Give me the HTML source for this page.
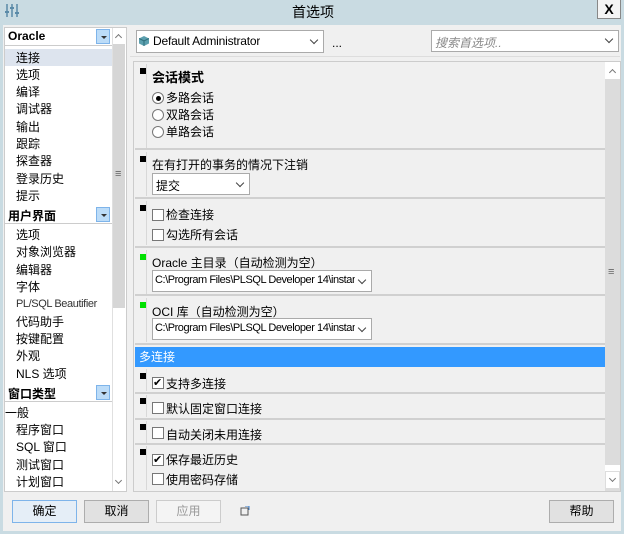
<!DOCTYPE html>
<html><head><meta charset="utf-8">
<style>
*{margin:0;padding:0;box-sizing:border-box}
body{width:624px;height:534px;background:#c9dbe2;font-family:"Liberation Sans","Noto Sans CJK SC",sans-serif;font-size:12px;color:#000;position:relative;overflow:hidden}
.a{position:absolute}
#main{left:3px;top:25px;width:618px;height:506px;background:#f0f0f0}
.t{position:absolute;white-space:nowrap;line-height:16px}
.n{font-size:11px;letter-spacing:-0.2px}
.hdr{position:absolute;left:5px;width:107px;height:18px;background:#fff;border-bottom:1px solid #ccc;font-weight:bold}
.hdr span{position:absolute;left:3px;top:1px}
.dd{position:absolute;right:2px;top:1px;width:14px;height:15px;background:#bcdcf8;border:1px solid #7eb4ea}
.dd:after{content:"";position:absolute;left:4px;top:6px;border:3px solid transparent;border-top:3px solid #333}
.sep{position:absolute;left:135px;width:470px;height:2px;background:#d0d0d0}
.sq{position:absolute;left:140px;width:6px;height:6px;background:#000}
.vl{position:absolute;left:146px;width:1px;background:#d8d8d8}
.cb{position:absolute;width:12px;height:12px;border:1px solid #777;background:#fff}
.rd{position:absolute;width:12px;height:12px;border:1px solid #777;border-radius:50%;background:#fff}
.sel{position:absolute;background:#fff;border:1px solid #aaa;height:22px}
.sel span{position:absolute;left:3px;top:3px;white-space:nowrap;overflow:hidden}
.chev{position:absolute;width:6px;height:6px;border-right:1.3px solid #444;border-bottom:1.3px solid #444;transform:rotate(45deg)}
.btn{position:absolute;top:500px;height:23px;background:#e1e1e1;border:1px solid #adadad;text-align:center;line-height:21px}
</style></head><body>
<svg class="a" style="left:5px;top:3px" width="14" height="15"><g stroke="#5a8aa8" stroke-width="1.5"><line x1="2" y1="1" x2="2" y2="14"/><line x1="7" y1="1" x2="7" y2="14"/><line x1="12" y1="1" x2="12" y2="14"/></g><g fill="#5a8aa8"><rect x="0" y="8" width="4" height="2"/><rect x="5" y="4" width="4" height="2"/><rect x="10" y="9" width="4" height="2"/></g></svg>
<div class="t" style="left:292px;top:4px;font-size:14px">首选项</div>
<div class="a" style="left:597px;top:-1px;width:24px;height:20px;background:#f4f4f4;border:1px solid #888;text-align:center;font-weight:bold;font-size:14px;line-height:18px">X</div>
<div id="main" class="a"></div>

<div class="a" style="left:4px;top:27px;width:123px;height:465px;border:1px solid #ccc;background:#fff"></div>
<div class="a" style="left:5px;top:28px;width:107px;height:463px;background:#fff"></div>
<div class="hdr" style="top:28px"><span>Oracle</span><div class="dd"></div></div>
<div class="a" style="left:5px;top:49px;width:107px;height:17px;background:#dde4ee"></div>
<div class="t" style="left:16px;top:50px">连接</div>
<div class="t" style="left:16px;top:67px">选项</div>
<div class="t" style="left:16px;top:84px">编译</div>
<div class="t" style="left:16px;top:101px">调试器</div>
<div class="t" style="left:16px;top:119px">输出</div>
<div class="t" style="left:16px;top:136px">跟踪</div>
<div class="t" style="left:16px;top:153px">探查器</div>
<div class="t" style="left:16px;top:171px">登录历史</div>
<div class="t" style="left:16px;top:188px">提示</div>
<div class="hdr" style="top:206px"><span>用户界面</span><div class="dd"></div></div>
<div class="t" style="left:16px;top:227px">选项</div>
<div class="t" style="left:16px;top:244px">对象浏览器</div>
<div class="t" style="left:16px;top:262px">编辑器</div>
<div class="t" style="left:16px;top:279px">字体</div>
<div class="t n" style="left:16px;top:296px;color:#333;letter-spacing:-0.4px">PL/SQL Beautifier</div>
<div class="t" style="left:16px;top:314px">代码助手</div>
<div class="t" style="left:16px;top:331px">按键配置</div>
<div class="t" style="left:16px;top:348px">外观</div>
<div class="t" style="left:16px;top:366px">NLS 选项</div>
<div class="hdr" style="top:384px"><span>窗口类型</span><div class="dd"></div></div>
<div class="t" style="left:5px;top:405px">一般</div>
<div class="t" style="left:16px;top:422px">程序窗口</div>
<div class="t" style="left:16px;top:439px">SQL 窗口</div>
<div class="t" style="left:16px;top:457px">测试窗口</div>
<div class="t" style="left:16px;top:474px">计划窗口</div>
<div class="a" style="left:112px;top:28px;width:14px;height:463px;background:#fff;border-left:1px solid #e0e0e0"></div>
<div class="chev" style="left:116px;top:35px;transform:rotate(225deg);width:5px;height:5px;border-color:#777;border-width:1px"></div>
<div class="a" style="left:113px;top:44px;width:12px;height:264px;background:#d6d6d6"></div>
<div class="t" style="left:115px;top:166px;color:#666;font-size:11px">≡</div>
<div class="chev" style="left:116px;top:478px;width:5px;height:5px;border-color:#777;border-width:1px"></div>

<div class="sel" style="left:136px;top:30px;width:188px;height:23px"><span class="n" style="left:16px;font-size:12px;letter-spacing:-0.2px">Default Administrator</span></div>
<svg class="a" style="left:139px;top:36px" width="10" height="10"><path d="M5 0L10 2.5V7.5L5 10L0 7.5V2.5Z" fill="#5b9fae"/><path d="M0 2.5L5 5L10 2.5M5 5V10" stroke="#2e6d7a" fill="none"/></svg>
<div class="chev" style="left:311px;top:37px"></div>
<div class="t" style="left:332px;top:35px">...</div>
<div class="sel" style="left:431px;top:30px;width:188px;height:22px"><span style="color:#888;font-style:italic">搜索首选项..</span></div>
<div class="chev" style="left:606px;top:36px"></div>
<div class="a" style="left:130px;top:56px;width:490px;height:1px;background:#ddd"></div>

<div class="a" style="left:133px;top:61px;width:488px;height:431px;border:1px solid #ccc;background:#f0f0f0"></div>
<div class="a" style="left:605px;top:62px;width:15px;height:429px;background:#dcdcdc"></div>
<div class="a" style="left:605px;top:62px;width:15px;height:17px;background:#fff"></div>
<div class="chev" style="left:610px;top:70px;transform:rotate(225deg);width:5px;height:5px;border-color:#777;border-width:1px"></div>
<div class="a" style="left:605px;top:465px;width:15px;height:6px;background:#fff"></div>
<div class="a" style="left:605px;top:471px;width:15px;height:18px;background:#fff;border:1px solid #ddd"></div>
<div class="chev" style="left:610px;top:476px;width:5px;height:5px;border-color:#777;border-width:1px"></div>
<div class="t" style="left:608px;top:264px;color:#666;font-size:11px">≡</div>

<div class="sq" style="top:68px"></div><div class="vl" style="top:64px;height:84px"></div>
<div class="t" style="left:152px;top:70px;font-weight:bold;font-size:13px">会话模式</div>
<div class="rd" style="left:152px;top:92px"></div><div class="a" style="left:156px;top:96px;width:5px;height:5px;border-radius:50%;background:#000"></div>
<div class="t" style="left:166px;top:90px">多路会话</div>
<div class="rd" style="left:152px;top:109px"></div><div class="t" style="left:166px;top:107px">双路会话</div>
<div class="rd" style="left:152px;top:126px"></div><div class="t" style="left:166px;top:124px">单路会话</div>
<div class="sep" style="top:148px"></div>
<div class="sq" style="top:156px"></div><div class="vl" style="top:152px;height:44px"></div>
<div class="t" style="left:152px;top:157px">在有打开的事务的情况下注销</div>
<div class="sel" style="left:152px;top:173px;width:98px"><span>提交</span></div>
<div class="chev" style="left:237px;top:180px"></div>
<div class="sep" style="top:197px"></div>
<div class="sq" style="top:205px"></div><div class="vl" style="top:201px;height:44px"></div>
<div class="cb" style="left:152px;top:209px"></div><div class="t" style="left:166px;top:207px">检查连接</div>
<div class="cb" style="left:152px;top:229px"></div><div class="t" style="left:166px;top:227px">勾选所有会话</div>
<div class="sep" style="top:246px"></div>
<div class="sq" style="top:254px;background:#00e000"></div><div class="vl" style="top:250px;height:44px"></div>
<div class="t" style="left:152px;top:255px">Oracle 主目录（自动检测为空）</div>
<div class="sel" style="left:152px;top:270px;width:220px"><span class="n" style="width:200px;left:2px;letter-spacing:-0.45px">C:\Program Files\PLSQL Developer 14\instantcl</span></div>
<div class="chev" style="left:359px;top:277px"></div>
<div class="sep" style="top:294px"></div>
<div class="sq" style="top:302px;background:#00e000"></div><div class="vl" style="top:298px;height:44px"></div>
<div class="t" style="left:152px;top:304px">OCI 库（自动检测为空）</div>
<div class="sel" style="left:152px;top:318px;width:220px"><span class="n" style="width:200px;left:2px;letter-spacing:-0.45px">C:\Program Files\PLSQL Developer 14\instantcl</span></div>
<div class="chev" style="left:359px;top:325px"></div>
<div class="sep" style="top:343px"></div>
<div class="a" style="left:135px;top:347px;width:470px;height:20px;background:#3399ff"></div>
<div class="t" style="left:139px;top:349px;color:#fff">多连接</div>
<div class="sq" style="top:373px"></div><div class="vl" style="top:369px;height:22px"></div>
<div class="cb" style="left:152px;top:377px"></div><div class="t" style="left:153px;top:375px;font-size:11px">✔</div><div class="t" style="left:166px;top:376px">支持多连接</div>
<div class="sep" style="top:392px"></div>
<div class="sq" style="top:398px"></div><div class="vl" style="top:395px;height:22px"></div>
<div class="cb" style="left:152px;top:402px"></div><div class="t" style="left:166px;top:401px">默认固定窗口连接</div>
<div class="sep" style="top:418px"></div>
<div class="sq" style="top:424px"></div><div class="vl" style="top:421px;height:22px"></div>
<div class="cb" style="left:152px;top:427px"></div><div class="t" style="left:166px;top:427px">自动关闭未用连接</div>
<div class="sep" style="top:443px"></div>
<div class="sq" style="top:449px"></div><div class="vl" style="top:446px;height:44px"></div>
<div class="cb" style="left:152px;top:454px"></div><div class="t" style="left:153px;top:452px;font-size:11px">✔</div><div class="t" style="left:166px;top:452px">保存最近历史</div>
<div class="cb" style="left:152px;top:473px"></div><div class="t" style="left:166px;top:472px">使用密码存储</div>

<div class="btn" style="left:12px;width:65px;border:1px solid #7eb4ea;background:#e5eef7">确定</div>
<div class="btn" style="left:84px;width:65px">取消</div>
<div class="btn" style="left:156px;width:65px;background:#f4f4f4;border-color:#ccc;color:#999">应用</div>
<svg class="a" style="left:240px;top:506px" width="10" height="10"><rect x="1" y="2" width="7" height="7" fill="none" stroke="#555"/><path d="M5 0L9 0L9 4" stroke="#3a7bc8" fill="none"/></svg>
<div class="btn" style="left:549px;width:65px">帮助</div>
</body></html>
